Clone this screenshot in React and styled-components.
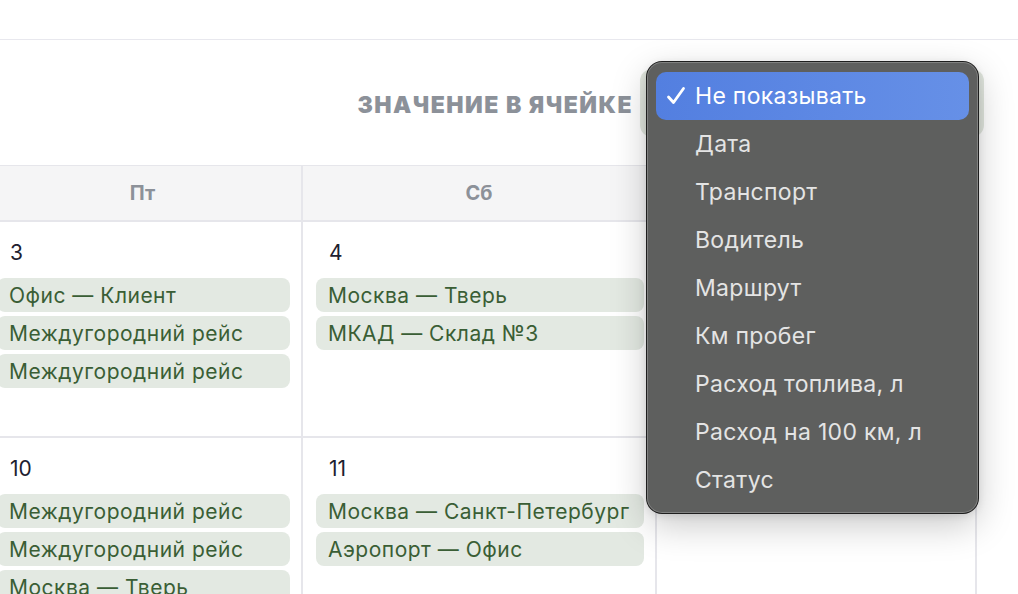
import React from 'react'
import styled, { createGlobalStyle } from 'styled-components'

const GlobalStyle = createGlobalStyle`
  body {
    margin: 0;
    background: #fff;
    font-family: Inter, "Noto Sans", sans-serif;
    overflow: hidden;
  }
`

const week = [
  {
    label: 'Пт',
    width: 319,
    days: [
      { day: 3, trips: ['Офис — Клиент', 'Междугородний рейс', 'Междугородний рейс'] },
      { day: 10, trips: ['Междугородний рейс', 'Междугородний рейс', 'Москва — Тверь'] },
    ],
  },
  {
    label: 'Сб',
    width: 354,
    days: [
      { day: 4, trips: ['Москва — Тверь', 'МКАД — Склад №3'] },
      { day: 11, trips: ['Москва — Санкт-Петербург', 'Аэропорт — Офис'] },
    ],
  },
  {
    label: 'Вс',
    width: 320,
    days: [
      { day: 5, trips: [] },
      { day: 12, trips: [] },
    ],
  },
]

const options = [
  'Не показывать',
  'Дата',
  'Транспорт',
  'Водитель',
  'Маршрут',
  'Км пробег',
  'Расход топлива, л',
  'Расход на 100 км, л',
  'Статус',
]

function Check() {
  return (
    <svg width="20" height="19" viewBox="0 0 20 19">
      <path d="M2.5 11 L7.5 16.5 L17.5 2.5" fill="none" stroke="#fff" strokeWidth="2.8" strokeLinecap="round" strokeLinejoin="round" />
    </svg>
  )
}

export default function App() {
  const selected = 'Не показывать'

  return (
    <>
      <GlobalStyle />
      <TopBar />

      <Toolbar>
        <FieldLabel>Значение в ячейке</FieldLabel>
        <SelectWrap>
          <Trigger />
          <Menu>
            {options.map(opt => (
              <Option key={opt} $active={opt === selected}>
                <CheckSlot>{opt === selected && <Check />}</CheckSlot>
                {opt}
              </Option>
            ))}
          </Menu>
        </SelectWrap>
      </Toolbar>

      <Calendar>
        <Grid $cols={week.map(c => c.width + 'px').join(' ')}>
          {week.map(col => (
            <HeadCell key={col.label}>{col.label}</HeadCell>
          ))}
          {[0, 1].map(row =>
            week.map(col => {
              const d = col.days[row]
              return (
                <DayCell key={col.label + row}>
                  <DayNum>{d.day}</DayNum>
                  {d.trips.map((t, i) => (
                    <Trip key={i}>{t}</Trip>
                  ))}
                </DayCell>
              )
            })
          )}
        </Grid>
      </Calendar>
    </>
  )
}

const TopBar = styled.div`
  height: 39px;
  border-bottom: 1px solid #e8e8ee;
`

const Toolbar = styled.div`
  height: 125px;
  display: flex;
  align-items: center;
  justify-content: flex-end;
  gap: 7px;
  padding-right: 34px;
`

const FieldLabel = styled.div`
  font-family: Inter, sans-serif;
  font-size: 23px;
  font-weight: 900;
  letter-spacing: 1.5px;
  text-transform: uppercase;
  color: #8c9199;
  margin-top: 4px;
  white-space: nowrap;
`

const SelectWrap = styled.div`
  position: relative;
  width: 344px;
  height: 68px;
`

const Trigger = styled.div`
  width: 100%;
  height: 100%;
  border-radius: 12px;
  background: #e2e7df;
`

const Menu = styled.div`
  position: absolute;
  left: 7px;
  top: -7px;
  width: 331px;
  box-sizing: border-box;
  padding: 10px 9px 9px;
  border-radius: 15px;
  background: #5e5f5e;
  box-shadow:
    0 0 0 1px #1e1e1e,
    inset 0 0 0 1px rgba(255, 255, 255, 0.22),
    0 12px 36px rgba(0, 0, 0, 0.22),
    0 2px 8px rgba(0, 0, 0, 0.12);
  z-index: 10;
`

const Option = styled.div`
  height: 48px;
  display: flex;
  align-items: center;
  border-radius: 10px;
  font-family: Inter, sans-serif;
  font-size: 23px;
  letter-spacing: 0.3px;
  color: ${p => (p.$active ? '#fff' : '#e4e4e4')};
  background: ${p => (p.$active ? 'linear-gradient(90deg, #537fe0, #6690e7)' : 'transparent')};
`

const CheckSlot = styled.span`
  width: 39px;
  flex-shrink: 0;
  display: flex;
  justify-content: flex-end;

  svg {
    margin-right: 9px;
  }
`

const Calendar = styled.div`
  overflow: hidden;
`

const Grid = styled.div`
  display: grid;
  grid-template-columns: ${p => p.$cols};
  grid-template-rows: 56px 216px 216px;
  margin-left: -16px;
  width: max-content;
  border-top: 1px solid #e6e6eb;
`

const HeadCell = styled.div`
  display: flex;
  align-items: center;
  justify-content: center;
  background: #f5f5f6;
  border-right: 2px solid #e6e6eb;
  border-bottom: 2px solid #e6e6eb;
  font-family: Inter, sans-serif;
  font-size: 20px;
  font-weight: 700;
  color: #8c9199;
`

const DayCell = styled.div`
  display: flex;
  flex-direction: column;
  gap: 4px;
  padding: 17px 11px 0 13px;
  border-right: 2px solid #e6e6eb;
  border-bottom: 2px solid #e6e6eb;
  overflow: hidden;
`

const DayNum = styled.div`
  font-family: Inter, sans-serif;
  font-size: 21px;
  color: #1d2130;
  padding-left: 13px;
  margin-bottom: 7px;
  line-height: 28px;
`

const Trip = styled.div`
  height: 34px;
  flex-shrink: 0;
  display: flex;
  align-items: center;
  padding: 0 12px;
  border-radius: 8px;
  background: #e3e9e2;
  font-family: Inter, sans-serif;
  font-size: 21px;
  letter-spacing: 0.5px;
  color: #3a5e35;
  white-space: nowrap;
`
